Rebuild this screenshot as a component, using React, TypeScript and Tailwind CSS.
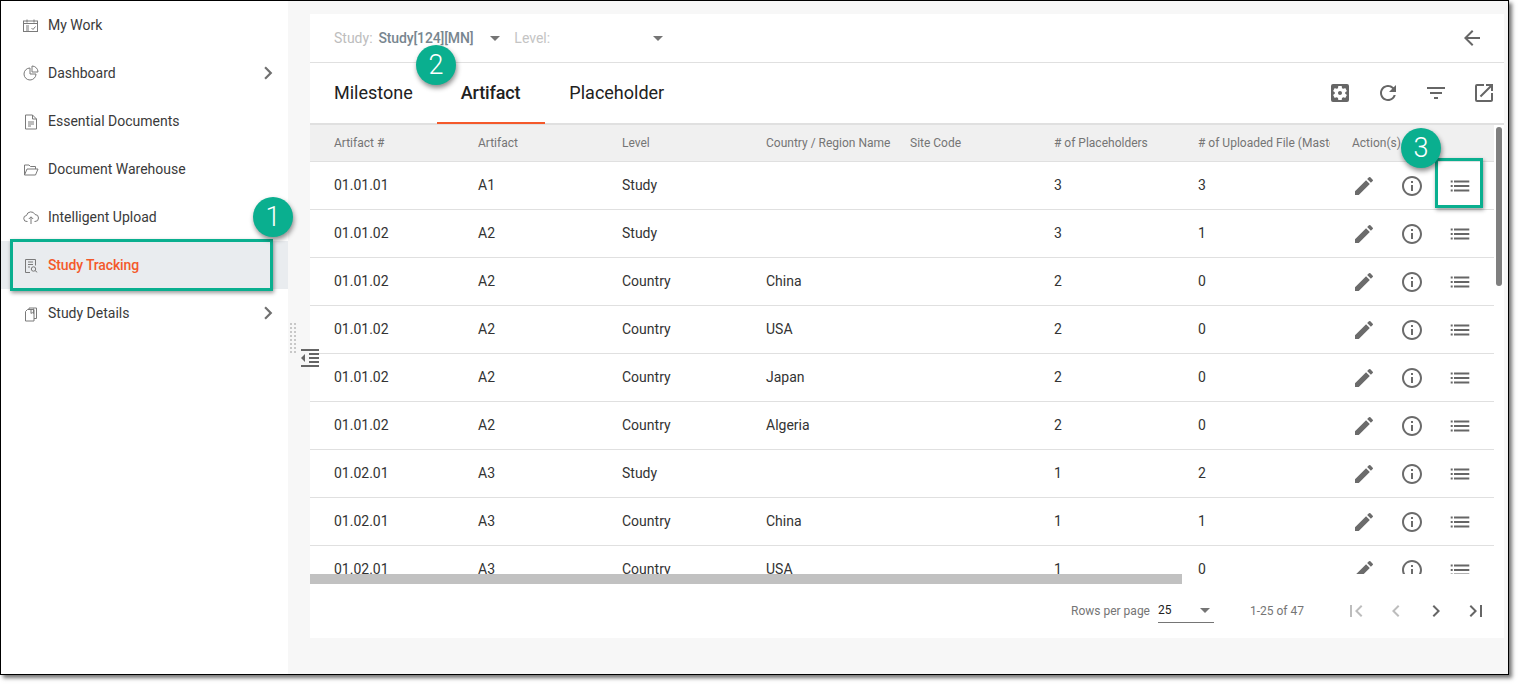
import {
  MdArrowBack,
  MdArrowDropDown,
  MdChevronLeft,
  MdChevronRight,
  MdEdit,
  MdFilterList,
  MdFirstPage,
  MdFormatIndentDecrease,
  MdInfoOutline,
  MdLastPage,
  MdOpenInNew,
  MdRefresh,
  MdSettingsApplications,
} from "react-icons/md";

const gridCols = "grid grid-cols-[repeat(6,144px)_156px_1fr]";

const rows = [
  ["01.01.01", "A1", "Study", "", "", "3", "3"],
  ["01.01.02", "A2", "Study", "", "", "3", "1"],
  ["01.01.02", "A2", "Country", "China", "", "2", "0"],
  ["01.01.02", "A2", "Country", "USA", "", "2", "0"],
  ["01.01.02", "A2", "Country", "Japan", "", "2", "0"],
  ["01.01.02", "A2", "Country", "Algeria", "", "2", "0"],
  ["01.02.01", "A3", "Study", "", "", "1", "2"],
  ["01.02.01", "A3", "Country", "China", "", "1", "1"],
  ["01.02.01", "A3", "Country", "USA", "", "1", "0"],
];

const headers = [
  "Artifact #",
  "Artifact",
  "Level",
  "Country / Region Name",
  "Site Code",
  "# of Placeholders",
  "# of Uploaded File (Master)",
];

function NavIcon({ name }: { name: string }) {
  const common = {
    width: 16,
    height: 16,
    viewBox: "0 0 16 16",
    fill: "none",
    stroke: "#7a7a7a",
    strokeWidth: 1,
    overflow: "visible",
  };
  if (name === "work")
    return (
      <svg {...common}>
        <rect x="0.5" y="4" width="14" height="10.5" />
        <path d="M0.5 6.5h14M4 2.5v3M11 2.5v3M3 9h3M3 11h3M3 13h3M8.5 11l1.5 1.5 2.5-3" />
      </svg>
    );
  if (name === "dash")
    return (
      <svg {...common}>
        <path d="M7 3a6 6 0 1 0 6 6H7z" />
        <path d="M9 1a6 6 0 0 1 6 6H9z" />
      </svg>
    );
  if (name === "doc")
    return (
      <svg {...common}>
        <path d="M2.5 2h7L13.5 6v10h-11z" />
        <path d="M9.5 2v4h4M5 9h6M5 11h6M5 13h3" />
      </svg>
    );
  if (name === "folder")
    return (
      <svg {...common}>
        <path d="M1.5 14V4h4.5l1.5 1.5h5V8" />
        <path d="M1.5 14l2.5-6h11l-2.5 6z" />
      </svg>
    );
  if (name === "upload")
    return (
      <svg {...common}>
        <path d="M4.5 12.5H4a3 3 0 0 1-.5-6A4.5 4.5 0 0 1 12 5.5a3.5 3.5 0 0 1 0 7h-.5" />
        <path d="M8 15V8M5.8 10L8 7.8l2.2 2.2" />
      </svg>
    );
  if (name === "track")
    return (
      <svg {...common}>
        <path d="M7 15.5H2.5v-13h10V8.5" />
        <path d="M5 5h5M5 7.5h5M5 10h2" />
        <circle cx="10.5" cy="12" r="2.2" />
        <path d="M12 13.5l2.2 1.8" />
      </svg>
    );
  return (
    <svg {...common}>
      <path d="M2.5 6.5l2-2h6.5v11.5H2.5z" />
      <path d="M6 4.5V3h7.5v10.5H11" />
      <path d="M8 4.5v4l1.2-1 1.3 1v-5" />
    </svg>
  );
}

function ListIcon() {
  return (
    <svg width="24" height="24" viewBox="0 0 24 24" fill="#666">
      <path d="M2.7 6.6h2v2h-2zM2.7 11h2v2h-2zM2.7 15.4h2v2h-2zM6 6.6h15.3v2H6zM6 11h15.3v2H6zM6 15.4h15.3v2H6z" />
    </svg>
  );
}

function NavItem({ icon, label, active, arrow }: { icon: string; label: string; active?: boolean; arrow?: boolean }) {
  return (
    <div className={`h-12 flex items-center pl-[22px] pr-[7px] ${active ? "bg-[#e9ecef]" : ""}`}>
      <NavIcon name={icon} />
      <span className={`ml-[9px] flex-1 text-sm ${active ? "text-[#f4592b] font-medium tracking-[-0.15px]" : "text-[#3a3a3a]"}`}>{label}</span>
      {arrow && <MdChevronRight size={26} className="text-[#707070]" />}
    </div>
  );
}

function Badge({ n, className }: { n: number; className: string }) {
  return (
    <div className={`absolute w-10 h-10 rounded-full bg-[#0aaf8f] text-white text-[27px] font-light flex items-center justify-center shadow-[1px_3px_5px_rgba(0,0,0,0.45)] ${className}`}>
      {n}
    </div>
  );
}

export default function App() {
  return (
    <div className="w-[1521px] h-[687px] bg-white overflow-hidden font-['Roboto',sans-serif]">
      <div className="relative w-[1509px] h-[675px] border border-black flex bg-white shadow-[3px_3px_4px_rgba(0,0,0,0.55)]">
        {/* Sidebar */}
        <div className="w-[287px] shrink-0 bg-white">
          <NavItem icon="work" label="My Work" />
          <NavItem icon="dash" label="Dashboard" arrow />
          <NavItem icon="doc" label="Essential Documents" />
          <NavItem icon="folder" label="Document Warehouse" />
          <NavItem icon="upload" label="Intelligent Upload" />
          <NavItem icon="track" label="Study Tracking" active />
          <NavItem icon="copy" label="Study Details" arrow />
        </div>

        {/* Gutter with resize handle */}
        <div className="relative z-10 w-[22px] shrink-0 bg-[#f7f7f7] flex flex-col items-start pt-[322px]">
          <div className="ml-[2px] grid grid-cols-2 w-[6px] gap-[2px]">
            {Array.from({ length: 16 }).map((_, i) => (
              <div key={i} className="w-[2px] h-[2px] bg-[#c8c8c8]" />
            ))}
          </div>
          <MdFormatIndentDecrease size={24} className="ml-[10px] -mt-[7px] text-[#666]" />
        </div>

        {/* Main */}
        <div className="flex-1 bg-[#f7f7f7] pt-[13px] pr-1">
          <div className="w-[1194px] h-[624px] bg-white flex flex-col">
            <div className="h-[49px] shrink-0 flex items-center border-b border-[#e0e0e0] pl-6 pr-5 text-sm">
              <span className="text-[#bdbdbd]">Study:</span>
              <span className="ml-[6px] font-medium text-[#78868f] tracking-[-0.15px]">Study[124][MN]</span>
              <MdArrowDropDown size={24} className="ml-[10px] text-[#757575]" />
              <span className="ml-[7px] text-[#c4c4c4]">Level:</span>
              <MdArrowDropDown size={24} className="ml-[96px] text-[#757575]" />
              <MdArrowBack size={24} className="ml-auto text-[#666]" />
            </div>

            <div className="h-[62px] shrink-0 flex items-stretch border-b-2 border-[#e0e0e0] text-lg text-[#212121] pr-2">
              <div className="px-6 flex items-center">Milestone</div>
              <div className="pl-6 pr-[25px] flex items-center font-medium tracking-[-0.15px] border-b-2 border-[#f4592b] -mb-[1px]">Artifact</div>
              <div className="px-6 flex items-center">Placeholder</div>
              <div className="ml-auto flex items-center gap-6 text-[#666]">
                <MdSettingsApplications size={24} />
                <MdRefresh size={24} />
                <MdFilterList size={24} />
                <MdOpenInNew size={24} />
              </div>
            </div>

            <div className="h-[449px] shrink-0 flex overflow-hidden">
              <div className="w-[1184px] shrink-0">
                <div className={`${gridCols} h-[37px] pb-px items-center bg-[#f0f0f0] border-b border-[#e0e0e0] text-xs text-[#757575]`}>
                  {headers.map((h, i) => (
                    <div key={h} className={`pl-6 whitespace-nowrap ${i === 6 ? "overflow-hidden" : ""}`}>{h}</div>
                  ))}
                  <div className="pl-[22px]">Action(s)</div>
                </div>
                {rows.map((r, i) => (
                  <div key={i} className={`${gridCols} h-12 pb-px items-center border-b border-[#e0e0e0] text-sm text-[#333]`}>
                    {r.map((c, j) => (
                      <div key={j} className="pl-6">{c}</div>
                    ))}
                    <div className="pl-[22px] mt-[2px] flex gap-6 text-[#6b6b6b]">
                      <MdEdit size={24} />
                      <MdInfoOutline size={24} />
                      <ListIcon />
                    </div>
                  </div>
                ))}
              </div>
              <div className="flex-1 pt-[2px] pl-[2px]">
                <div className="w-[6px] h-[159px] rounded-full bg-[#7f7f7f]" />
              </div>
            </div>

            <div className="h-[10px] shrink-0">
              <div className="w-[872px] h-[10px] bg-[#c1c1c1]" />
            </div>

            <div className="flex-1 flex items-center justify-end pr-4 pb-px text-xs text-[#757575]">
              <span>Rows per page</span>
              <div className="ml-2 w-14 h-6 flex items-center justify-between border-b border-[#757575] text-[#212121]">
                <span>25</span>
                <MdArrowDropDown size={24} className="text-[#757575] -mr-[3px]" />
              </div>
              <span className="ml-9">1-25 of 47</span>
              <div className="ml-[40px] flex gap-4">
                <MdFirstPage size={24} className="text-[#bdbdbd]" />
                <MdChevronLeft size={24} className="text-[#bdbdbd]" />
                <MdChevronRight size={24} className="text-[#666]" />
                <MdLastPage size={24} className="text-[#666]" />
              </div>
            </div>
          </div>
        </div>

        {/* Callouts */}
        <div className="absolute z-20 left-[9px] top-[238px] w-[263px] h-[52px] border-[3px] border-[#0aaf8f] shadow-[1px_2px_4px_rgba(0,0,0,0.4)]" />
        <div className="absolute z-20 left-[1434px] top-[157px] w-[48px] h-[50px] border-[3px] border-[#0aaf8f] shadow-[1px_2px_4px_rgba(0,0,0,0.4)]" />
        <Badge n={1} className="z-20 left-[252px] top-[196px]" />
        <Badge n={2} className="z-20 left-[415px] top-[44px]" />
        <Badge n={3} className="z-20 left-[1400px] top-[127px]" />
      </div>
    </div>
  );
}
